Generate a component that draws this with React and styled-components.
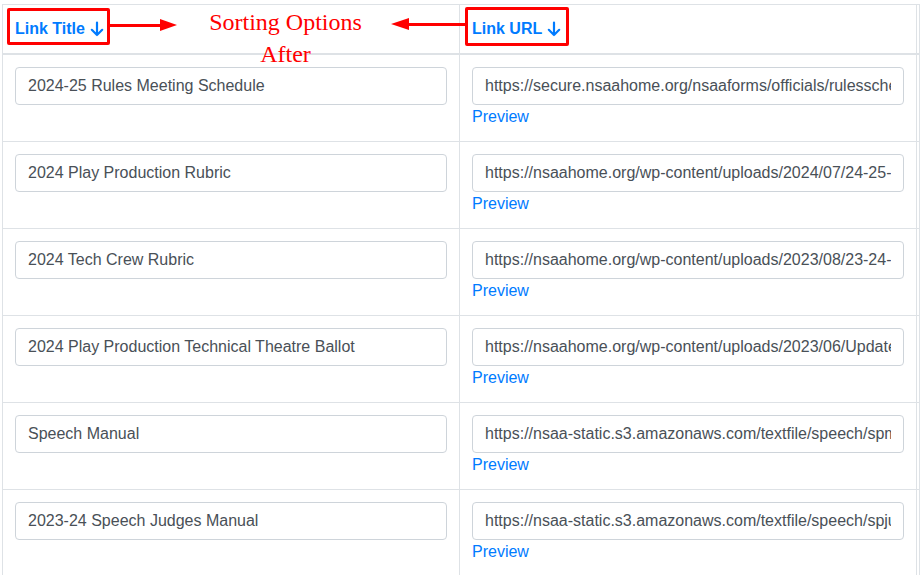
import React from "react";
import styled, { createGlobalStyle } from "styled-components";

const rows = [
  {
    title: "2024-25 Rules Meeting Schedule",
    url: "https://secure.nsaahome.org/nsaaforms/officials/rulesschedule.php",
  },
  {
    title: "2024 Play Production Rubric",
    url: "https://nsaahome.org/wp-content/uploads/2024/07/24-25-Play-Production-Rubric.pdf",
  },
  {
    title: "2024 Tech Crew Rubric",
    url: "https://nsaahome.org/wp-content/uploads/2023/08/23-24-Tech-Crew-Rubric.pdf",
  },
  {
    title: "2024 Play Production Technical Theatre Ballot",
    url: "https://nsaahome.org/wp-content/uploads/2023/06/Updated-Technical-Theatre-Ballot.pdf",
  },
  {
    title: "Speech Manual",
    url: "https://nsaa-static.s3.amazonaws.com/textfile/speech/spmanual.pdf",
  },
  {
    title: "2023-24 Speech Judges Manual",
    url: "https://nsaa-static.s3.amazonaws.com/textfile/speech/spjudgesmanual.pdf",
  },
];

function SortArrow() {
  return (
    <svg width="14" height="16" viewBox="0 0 14 16" fill="none">
      <path
        d="M7 1.5v12.5M1.8 8.8L7 14l5.2-5.2"
        stroke="currentColor"
        strokeWidth="2.2"
        strokeLinecap="round"
        strokeLinejoin="round"
      />
    </svg>
  );
}

export default function App() {
  return (
    <>
      <GlobalStyle />
      <Page>
        <Table>
          <colgroup>
            <col style={{ width: 457 }} />
            <col style={{ width: 457 }} />
            <col />
          </colgroup>
          <thead>
            <tr>
              <Th>
                <SortButton>
                  Link Title
                  <SortArrow />
                </SortButton>
              </Th>
              <Th>
                <SortButton>
                  Link URL
                  <SortArrow />
                </SortButton>
              </Th>
              <Th $edge />
            </tr>
          </thead>
          <tbody>
            {rows.map((r) => (
              <tr key={r.title}>
                <Td>
                  <Field readOnly value={r.title} />
                </Td>
                <Td>
                  <Field readOnly value={r.url} />
                  <PreviewLink href="#">Preview</PreviewLink>
                </Td>
                <Td $edge />
              </tr>
            ))}
          </tbody>
        </Table>

        <Highlight $left={7} $top={8} $width={103} $height={37} />
        <Highlight $left={465} $top={7} $width={104} $height={39} />
        <Arrow $left={109} $top={19} $width={68} $dir="right" />
        <Arrow $left={391} $top={18} $width={75} $dir="left" />
        <Note>
          Sorting Options
          <br />
          After
        </Note>
      </Page>
    </>
  );
}

const GlobalStyle = createGlobalStyle`
  html, body {
    margin: 0;
    background: #fff;
    overflow: hidden;
  }
  body {
    font-family: "Liberation Sans", Arial, sans-serif;
  }
`;

const Page = styled.div`
  position: relative;
  padding: 4px 0 0 2px;
  width: 918px;
  height: 571px;
  overflow: hidden;
`;

const Table = styled.table`
  border-collapse: collapse;
  table-layout: fixed;
  width: 918px;
  color: #212529;
  font-size: 16px;
  line-height: 1.5;
`;

const Th = styled.th`
  height: 24px;
  padding: ${(p) => (p.$edge ? "0" : "12px")};
  text-align: left;
  vertical-align: bottom;
  border: 1px solid #dee2e6;
  border-bottom: 2px solid #dee2e6;
`;

const Td = styled.td`
  padding: ${(p) => (p.$edge ? "0" : "12px")};
  vertical-align: top;
  border: 1px solid #dee2e6;
`;

const SortButton = styled.span`
  display: inline-flex;
  align-items: center;
  gap: 5px;
  color: #007bff;
  font-weight: 700;
  font-size: 16px;

  & svg {
    margin-top: -1px;
  }
`;

const Field = styled.input`
  display: block;
  box-sizing: border-box;
  width: 100%;
  height: 38px;
  padding: 6px 12px;
  font-family: "Liberation Sans", Arial, sans-serif;
  font-size: 16px;
  line-height: 1.5;
  color: #495057;
  background: #fff;
  border: 1px solid #ced4da;
  border-radius: 4px;
  outline: none;
`;

const PreviewLink = styled.a`
  display: block;
  color: #007bff;
  text-decoration: none;
  line-height: 24px;
`;

const Highlight = styled.div`
  position: absolute;
  left: ${(p) => p.$left}px;
  top: ${(p) => p.$top}px;
  width: ${(p) => p.$width}px;
  height: ${(p) => p.$height}px;
  box-sizing: border-box;
  border: 3px solid #ff0000;
  border-radius: 2px;
`;

const Arrow = styled.div`
  position: absolute;
  left: ${(p) => p.$left}px;
  top: ${(p) => p.$top}px;
  width: ${(p) => p.$width}px;
  height: 13px;

  &::before {
    content: "";
    position: absolute;
    top: 5px;
    height: 3px;
    background: #ff0000;
    ${(p) => (p.$dir === "right" ? "left: 0; right: 14px;" : "right: 0; left: 14px;")}
  }

  &::after {
    content: "";
    position: absolute;
    top: 0;
    width: 0;
    height: 0;
    border-top: 6.5px solid transparent;
    border-bottom: 6.5px solid transparent;
    ${(p) =>
      p.$dir === "right"
        ? "right: 0; border-left: 17px solid #ff0000;"
        : "left: 0; border-right: 18px solid #ff0000;"}
  }
`;

const Note = styled.div`
  position: absolute;
  left: 183px;
  top: 6px;
  width: 205px;
  text-align: center;
  font-family: "Liberation Serif", "Times New Roman", serif;
  font-size: 24px;
  line-height: 32px;
  color: #ff0000;
`;
